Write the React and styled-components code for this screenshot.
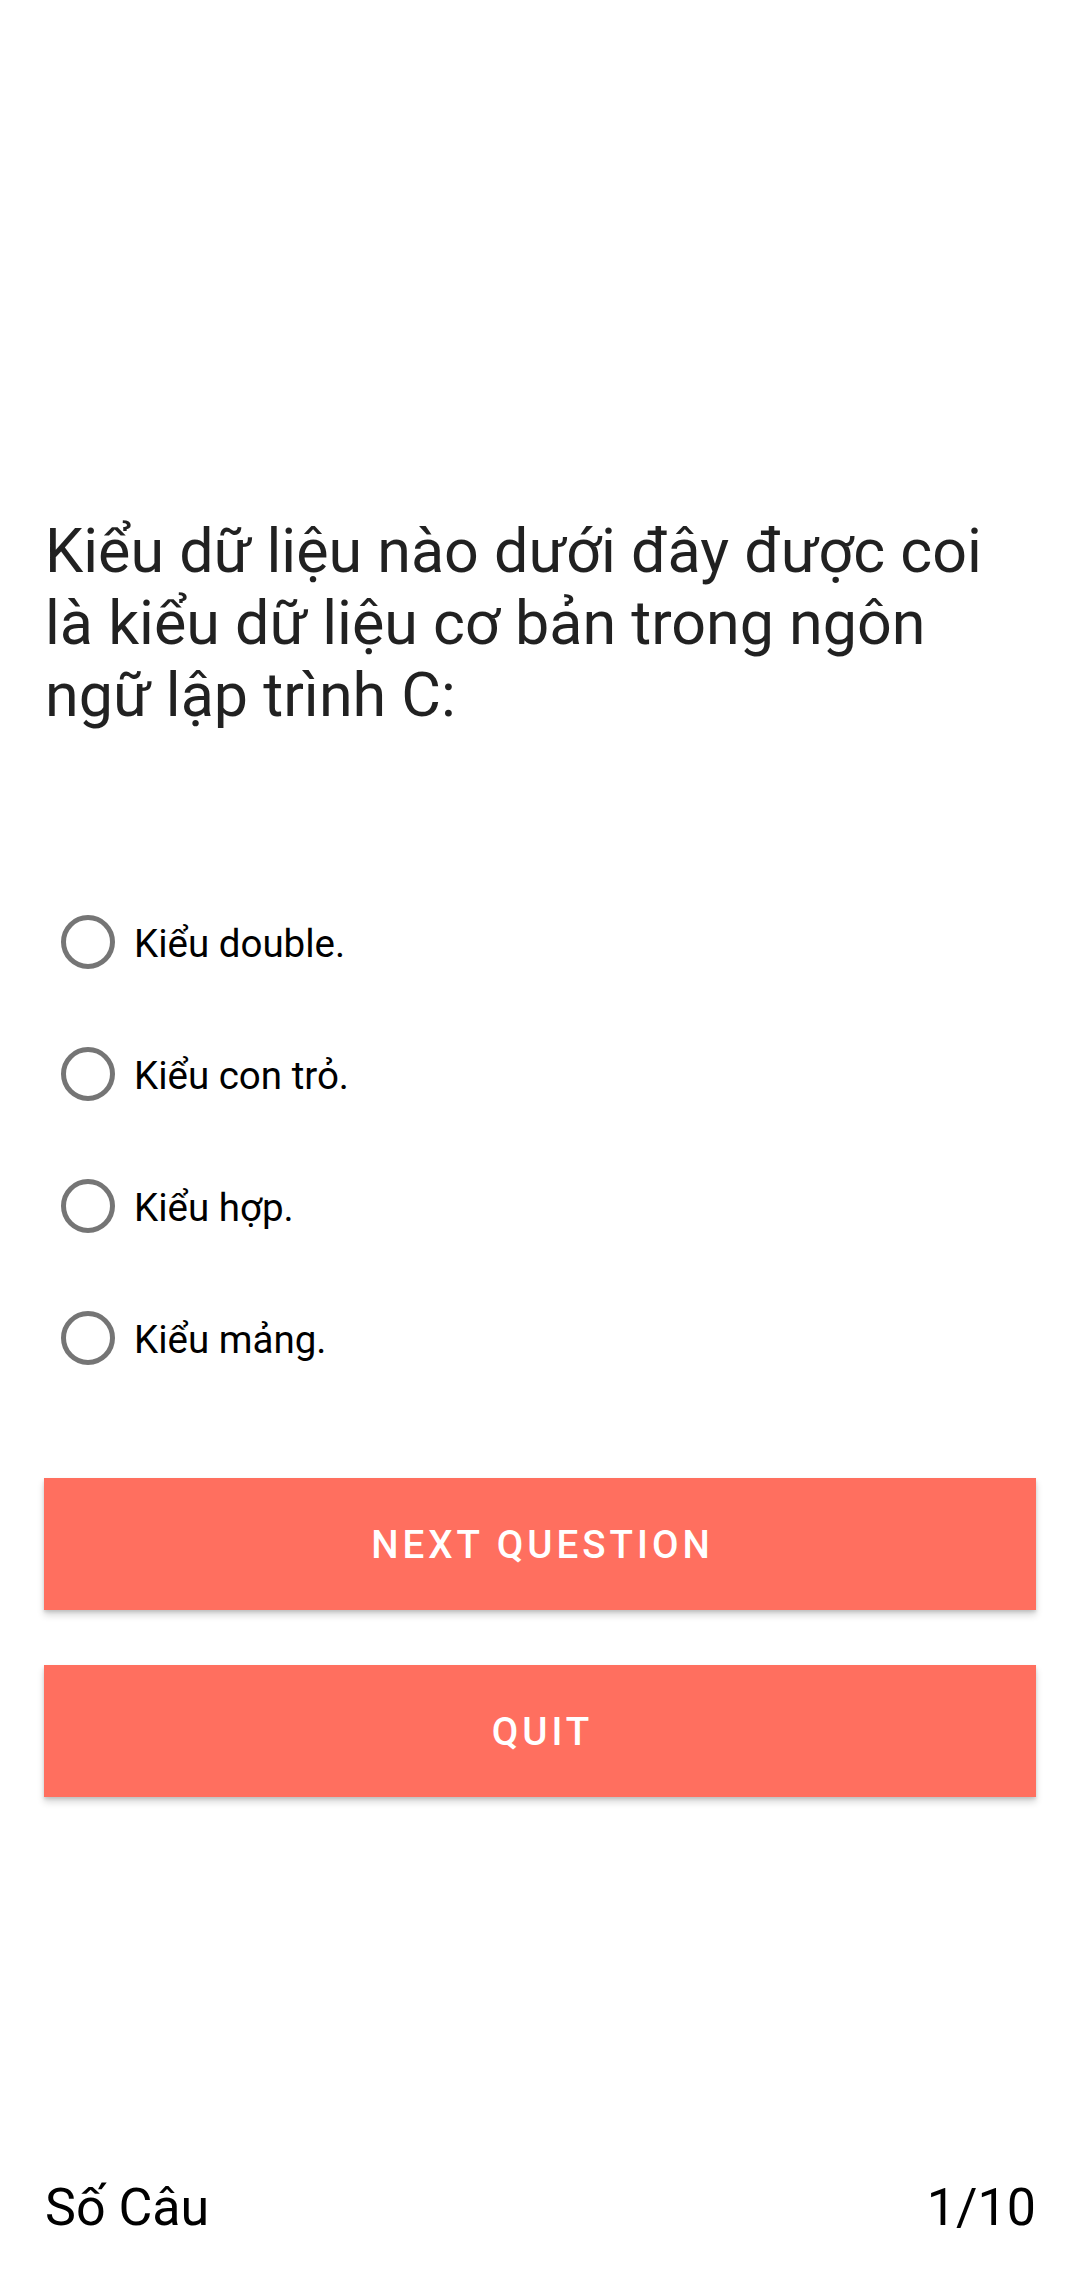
import React, { useState } from "react";
import styled, { createGlobalStyle } from "styled-components";

const Global = createGlobalStyle`
  html, body { margin: 0; padding: 0; background: #ffffff; }
  body { font-family: Roboto, "Noto Sans", "Liberation Sans", sans-serif; }
  * { box-sizing: border-box; }
`;

const Screen = styled.div`
  width: 1080px;
  height: 2280px;
  display: flex;
  flex-direction: column;
  padding: 515px 44px 0 44px;
  background: #ffffff;
`;

const Question = styled.div`
  font-family: Roboto, "Noto Sans", sans-serif;
  font-size: 61px;
  line-height: 72px;
  color: rgba(0, 0, 0, 0.87);
  padding-left: 1px;
  padding-right: 8px;
  min-height: 216px;
`;

const Options = styled.div`
  display: flex;
  flex-direction: column;
  margin-top: 145px;
`;

const OptionRow = styled.label`
  display: flex;
  align-items: center;
  height: 132px;
  padding-left: 17px;
  cursor: pointer;
`;

const Radio = styled.span`
  width: 54px;
  height: 54px;
  border-radius: 50%;
  border: 5.5px solid ${(p) => (p.$checked ? "#ff7060" : "#757575")};
  display: flex;
  align-items: center;
  justify-content: center;
  flex-shrink: 0;
  &::after {
    content: "";
    width: 26px;
    height: 26px;
    border-radius: 50%;
    background: #ff7060;
    display: ${(p) => (p.$checked ? "block" : "none")};
  }
`;

const OptionText = styled.span`
  margin-left: 19px;
  font-family: Roboto, "Noto Sans", sans-serif;
  font-size: 38.5px;
  color: #000000;
  position: relative;
  top: 1px;
`;

const Buttons = styled.div`
  display: flex;
  flex-direction: column;
  gap: 55px;
  margin-top: 74px;
`;

const ActionButton = styled.button`
  height: 132px;
  width: 100%;
  border: none;
  border-radius: 0;
  background: #ff6f5f;
  color: #ffffff;
  font-family: Roboto, "Noto Sans", sans-serif;
  font-weight: 500;
  font-size: 38.5px;
  letter-spacing: 4px;
  text-transform: uppercase;
  box-shadow: 0 5px 7px rgba(0, 0, 0, 0.16), 0 2px 3px rgba(0, 0, 0, 0.12);
  cursor: pointer;
  padding: 0 0 0 5px;
`;

const Spacer = styled.div`
  flex: 1;
`;

const Footer = styled.div`
  display: flex;
  justify-content: space-between;
  align-items: baseline;
  font-family: Roboto, "Noto Sans", sans-serif;
  font-size: 52px;
  line-height: 61px;
  color: #000000;
  padding: 0 0 0 1px;
  margin-bottom: 42px;
`;

const options = ["Kiểu double.", "Kiểu con trỏ.", "Kiểu hợp.", "Kiểu mảng."];

export default function App() {
  const [selected, setSelected] = useState(null);
  return (
    <>
      <Global />
      <Screen>
        <Question>
          Kiểu dữ liệu nào dưới đây được coi là kiểu dữ liệu cơ bản trong ngôn ngữ lập trình C:
        </Question>
        <Options>
          {options.map((o, i) => (
            <OptionRow key={o} onClick={() => setSelected(i)}>
              <Radio $checked={selected === i} />
              <OptionText>{o}</OptionText>
            </OptionRow>
          ))}
        </Options>
        <Buttons>
          <ActionButton>Next Question</ActionButton>
          <ActionButton>Quit</ActionButton>
        </Buttons>
        <Spacer />
        <Footer>
          <span>Số Câu</span>
          <span>1/10</span>
        </Footer>
      </Screen>
    </>
  );
}
